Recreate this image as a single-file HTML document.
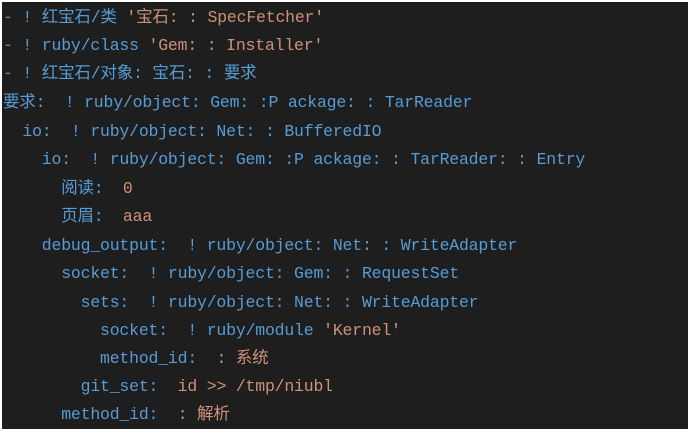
<!DOCTYPE html>
<html><head><meta charset="utf-8"><style>
html,body{margin:0;padding:0;background:#fff;width:690px;height:433px;overflow:hidden}
#c{position:absolute;left:2px;top:2px;width:686px;height:427px;background:#1e1e1e;overflow:hidden}
.l{position:absolute;left:1px;white-space:pre;font-family:"Liberation Mono","Noto Sans CJK SC",monospace;font-size:16.5px;letter-spacing:-0.2px;line-height:20px;color:#569cd6}
.o{color:#ce9178}.g{color:#808080}
</style></head><body><div id="c">
<div class="l" style="top:6px"><span class="g">-</span> ! 红宝石/类 <span class="o">'宝石: : SpecFetcher'</span></div>
<div class="l" style="top:34px"><span class="g">-</span> ! ruby/class <span class="o">'Gem: : Installer'</span></div>
<div class="l" style="top:62px"><span class="g">-</span> ! 红宝石/对象: 宝石: : 要求</div>
<div class="l" style="top:91px">要求:  ! ruby/object: Gem: :P ackage: : TarReader</div>
<div class="l" style="top:120px">  io:  ! ruby/object: Net: : BufferedIO</div>
<div class="l" style="top:148px">    io:  ! ruby/object: Gem: :P ackage: : TarReader: : Entry</div>
<div class="l" style="top:177px">      阅读:  <span class="o">0</span></div>
<div class="l" style="top:205px">      页眉:  <span class="o">aaa</span></div>
<div class="l" style="top:234px">    debug_output:  ! ruby/object: Net: : WriteAdapter</div>
<div class="l" style="top:262px">      socket:  ! ruby/object: Gem: : RequestSet</div>
<div class="l" style="top:291px">        sets:  ! ruby/object: Net: : WriteAdapter</div>
<div class="l" style="top:319px">          socket:  ! ruby/module <span class="o">'Kernel'</span></div>
<div class="l" style="top:347px">          method_id:  <span class="o">: 系统</span></div>
<div class="l" style="top:375px">        git_set:  <span class="o">id &gt;&gt; /tmp/niubl</span></div>
<div class="l" style="top:403px">      method_id:  <span class="o">: 解析</span></div>
</div></body></html>
